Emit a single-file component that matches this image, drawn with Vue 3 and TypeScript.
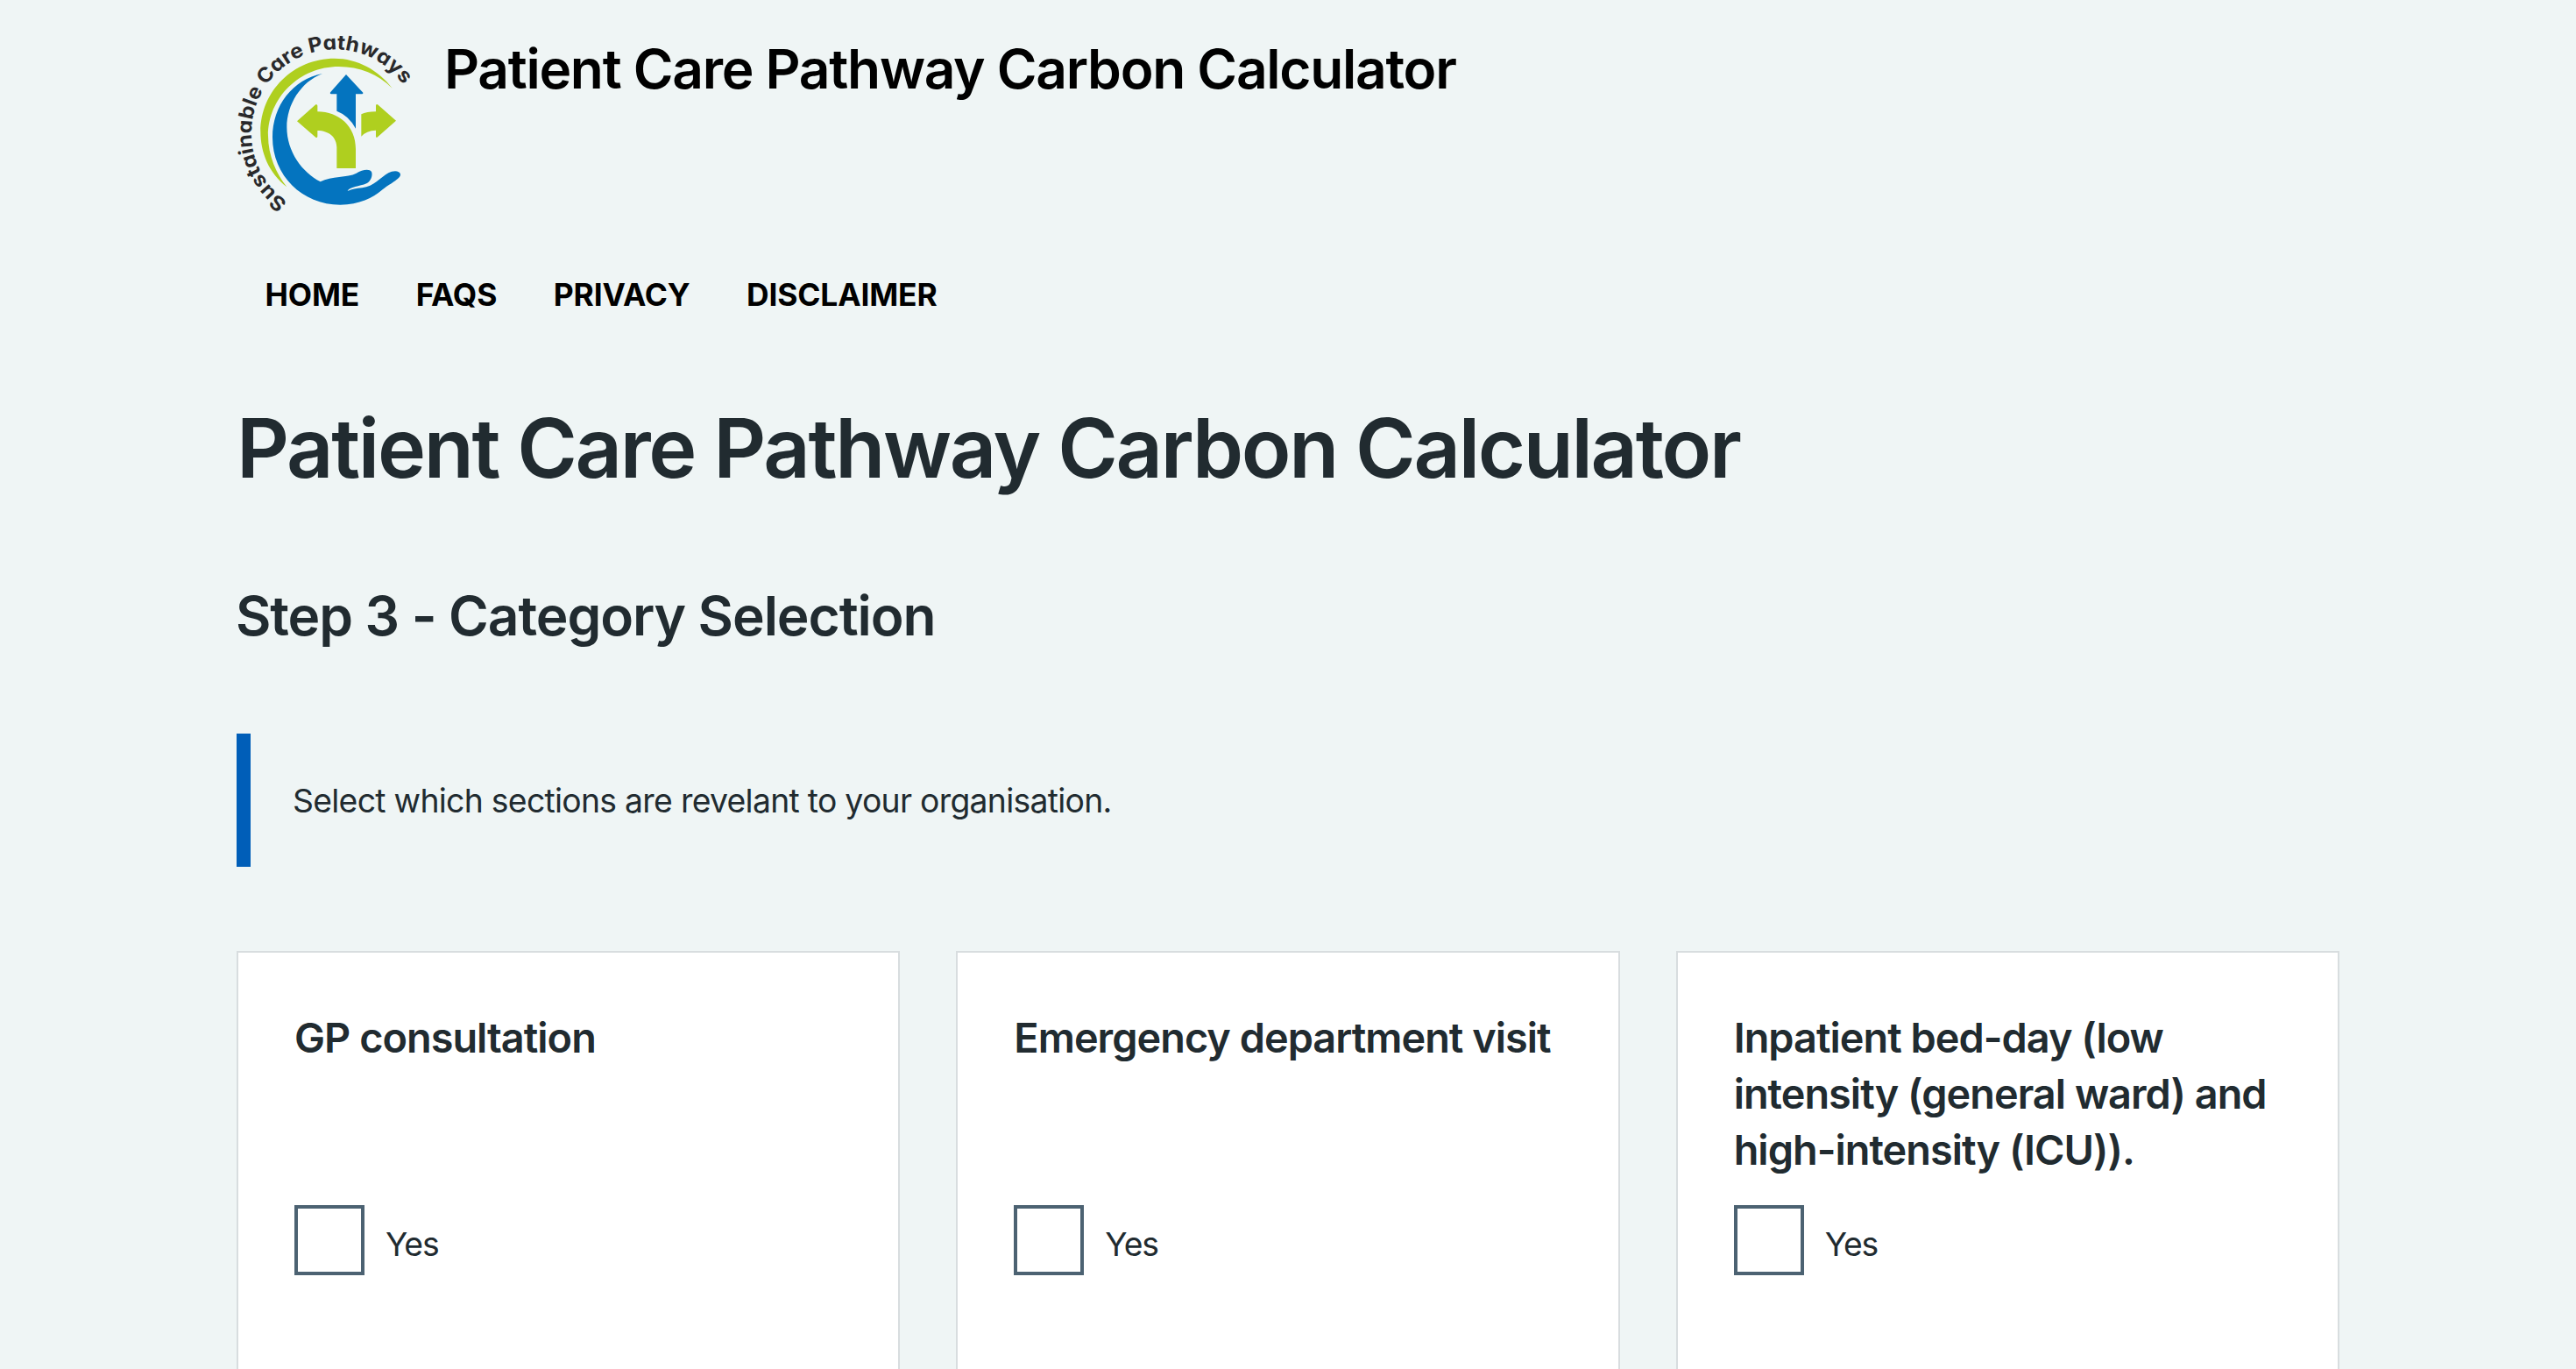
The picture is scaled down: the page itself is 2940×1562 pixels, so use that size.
<script setup lang="ts">
import { ref } from 'vue'

interface Category {
  id: string
  title: string
}

const links: string[] = ['Home', 'FAQs', 'Privacy', 'Disclaimer']

const categories: Category[] = [
  { id: 'gp', title: 'GP consultation' },
  { id: 'ed', title: 'Emergency department visit' },
  { id: 'inpatient', title: 'Inpatient bed-day (low intensity (general ward) and high-intensity (ICU)).' },
]

const selected = ref<string[]>([])
</script>

<template>
  <div class="page">
    <div class="container">
      <header class="header">
        <svg class="logo" viewBox="60 60 600 600" role="img" aria-label="Sustainable Care Pathways">
          <defs>
            <path id="logo-ring" d="M235 631 A286 286 0 1 1 653 268" />
          </defs>
          <text class="logo-text"><textPath href="#logo-ring" textLength="1000" lengthAdjust="spacingAndGlyphs">Sustainable Care Pathways</textPath></text>
          <path
            class="green"
            d="M232 580C170 532 142 462 142 391C142 252 255 140 395 140C474 140 546 180 593 242C545 193 480 168 410 168C275 168 168 275 168 405C168 472 196 535 232 580Z"
          />
          <path
            class="blue"
            d="M354 192C252 212 183 302 183 410C183 540 285 641 415 641C480 641 528 616 556 592C582 570 622 552 621 537C619 523 596 523 580 532C554 546 530 579 490 583C470 585 455 588 440 594C446 580 482 578 505 568C520 560 527 540 522 528C515 517 490 521 470 533C440 549 385 541 347 562C285 530 232 460 232 375C232 298 280 220 354 192Z"
          />
          <path class="blue" d="M435 195L493 257Q494 262 489 262H468V380Q445 336 403 320V262H384Q378 260 382 255Z" />
          <path class="green" d="M267 355L331 298Q337 296 337 302V322C410 322 468 372 468 450V516H403V445C403 410 376 387 337 387V407Q336 413 331 410Z" />
          <path class="green" d="M606 353L543 298Q537 295 537 302V322Q505 322 487 331V407Q504 387 537 386V407Q538 413 543 409Z" />
        </svg>
        <div class="site-name">Patient Care Pathway Carbon Calculator</div>
      </header>

      <nav class="nav">
        <a v-for="link in links" :key="link" class="nav-link">{{ link }}</a>
      </nav>

      <main>
        <h1 class="title">Patient Care Pathway Carbon Calculator</h1>
        <h2 class="step">Step 3 - Category Selection</h2>
        <div class="inset">
          <p class="inset-text">Select which sections are revelant to your organisation.</p>
        </div>
        <div class="cards">
          <section v-for="category in categories" :key="category.id" class="card">
            <h3 class="card-title">{{ category.title }}</h3>
            <label class="choice">
              <input v-model="selected" class="checkbox" type="checkbox" :value="category.id" />
              <span class="choice-text">Yes</span>
            </label>
          </section>
        </div>
      </main>
    </div>
  </div>
</template>

<style>
html,
body {
  margin: 0;
  overflow: hidden;
}
</style>

<style scoped>
.page {
  box-sizing: border-box;
  height: 1562px;
  overflow: hidden;
  background: #eff5f5;
  color: #212b30;
  font-family: Inter, 'Liberation Sans', sans-serif;
}

.container {
  width: 2400px;
  margin: 0 auto;
  padding-top: 40px;
}

.header {
  display: flex;
  gap: 37px;
  height: 200px;
}

.logo {
  flex: none;
  width: 200px;
  height: 200px;
  overflow: visible;
}

.logo-text {
  fill: #29292b;
  font-size: 69px;
  font-weight: 700;
  font-feature-settings: 'cv11';
}

.green {
  fill: #afcf1f;
}

.blue {
  fill: #0474bf;
}

.site-name {
  padding-top: 3px;
  color: #000;
  font-size: 62.2px;
  font-weight: 600;
  line-height: 72px;
  letter-spacing: -0.0206em;
  white-space: nowrap;
}

.nav {
  display: flex;
  gap: 64.6px;
  padding: 73px 0 0 32.5px;
}

.nav-link {
  color: #000;
  font-size: 35.4px;
  font-weight: 700;
  line-height: 48px;
  letter-spacing: -0.15px;
  text-transform: uppercase;
  white-space: nowrap;
}

.title {
  margin: 94px 0 0;
  font-size: 93.2px;
  font-weight: 600;
  line-height: 112px;
  letter-spacing: -0.0247em;
  white-space: nowrap;
}

.step {
  margin: 100px 0 0 -1px;
  font-size: 62.2px;
  font-weight: 600;
  line-height: 72px;
  letter-spacing: -0.0175em;
}

.inset {
  margin-top: 98px;
  padding: 49px 0 47px 48px;
  border-left: 16px solid #005eb8;
}

.inset-text {
  margin: 0;
  font-size: 37.3px;
  line-height: 56px;
  letter-spacing: -0.0187em;
}

.cards {
  display: grid;
  grid-template-columns: repeat(3, 1fr);
  gap: 64px;
  margin-top: 96px;
}

.card {
  box-sizing: border-box;
  height: 560px;
  padding: 65px 64px 64px;
  border: 2px solid #d8dddf;
  background: #fff;
}

.card-title {
  min-height: 192px;
  margin: 0 0 31px;
  font-size: 46.8px;
  font-weight: 600;
  line-height: 64px;
  letter-spacing: -0.0205em;
}

.choice {
  display: flex;
  gap: 24px;
}

.checkbox {
  flex: none;
  box-sizing: border-box;
  width: 80px;
  height: 80px;
  margin: 0;
  border: 4px solid #4c6272;
  background: #fff;
  appearance: none;
}

.choice-text {
  padding-top: 17px;
  font-size: 37.3px;
  line-height: 56px;
  letter-spacing: -0.03em;
}
</style>
